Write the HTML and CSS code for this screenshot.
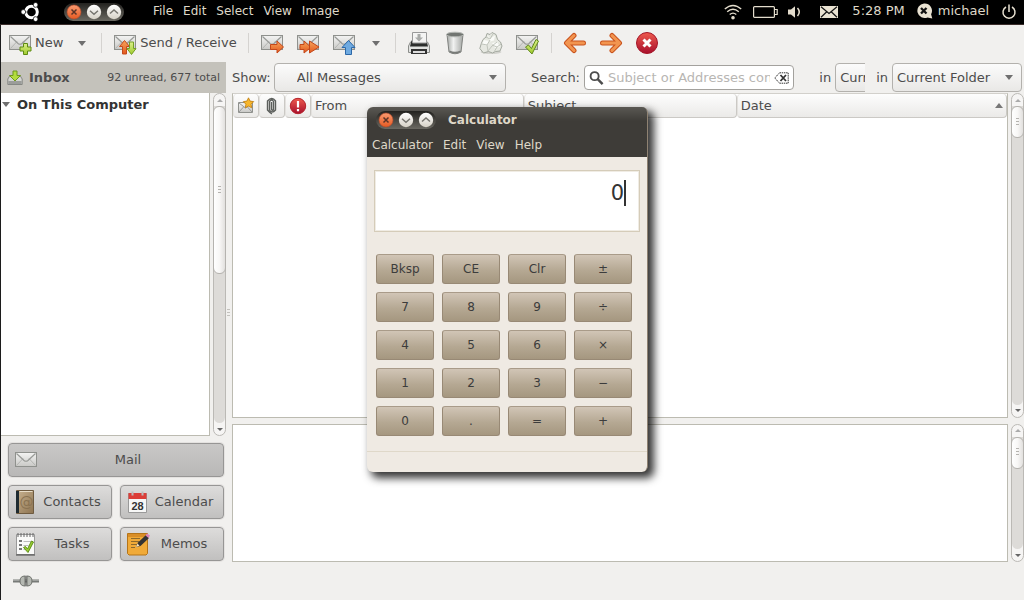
FILE: index.html
```
<!DOCTYPE html>
<html lang="en">
<head>
<meta charset="utf-8">
<title>Inbox</title>
<link rel="stylesheet" href="styles.css">
</head>
<body>
<svg class="defs" aria-hidden="true">
  <defs>
    <linearGradient id="g-env" x1="0" y1="0" x2="0" y2="1"><stop offset="0" stop-color="#f4f4f3"/><stop offset="1" stop-color="#c9c9c6"/></linearGradient>
    <linearGradient id="g-orange" x1="0" y1="0" x2="0" y2="1"><stop offset="0" stop-color="#f7a55c"/><stop offset="1" stop-color="#e2571c"/></linearGradient>
    <linearGradient id="g-green" x1="0" y1="0" x2="0" y2="1"><stop offset="0" stop-color="#dcf08a"/><stop offset="1" stop-color="#9fca2c"/></linearGradient>
    <linearGradient id="g-red" x1="0" y1="0" x2="0" y2="1"><stop offset="0" stop-color="#ee5a4e"/><stop offset="1" stop-color="#a80f2c"/></linearGradient>
    <linearGradient id="g-knob" x1="0" y1="0" x2="0" y2="1"><stop offset="0" stop-color="#ffffff"/><stop offset="1" stop-color="#d6d1c6"/></linearGradient>
    <linearGradient id="g-close" x1="0" y1="0" x2="0" y2="1"><stop offset="0" stop-color="#f99a70"/><stop offset="1" stop-color="#e65a22"/></linearGradient>
    <linearGradient id="g-metal" x1="0" y1="0" x2="1" y2="0"><stop offset="0" stop-color="#a4a7a4"/><stop offset=".4" stop-color="#f1f2f1"/><stop offset="1" stop-color="#a4a7a4"/></linearGradient>
    <linearGradient id="g-book" x1="0" y1="0" x2="1" y2="1"><stop offset="0" stop-color="#c9b391"/><stop offset="1" stop-color="#8d7350"/></linearGradient>
    <symbol id="env" viewBox="0 0 24 24">
      <rect x="1.5" y="4.500" width="21" height="14" fill="url(#g-env)" stroke="#8f918d"/>
      <path d="M2.500 17.500 9 10.500M21.500 17.500 15 10.500" stroke="#b4b5b2" fill="none"/>
      <path d="M2.500 5.500 10 12.500Q12 14 14 12.500L21.500 5.500" stroke="#989a97" fill="none" stroke-width="1.200"/>
    </symbol>
    <symbol id="knob-x" viewBox="0 0 16 16"><circle cx="8" cy="8" r="7" fill="url(#g-close)" stroke="#b9492a" stroke-width=".6"/><path d="M5.500 5.500l5 5M10.500 5.500l-5 5" stroke="#5c3427" stroke-width="1.500"/></symbol>
    <symbol id="knob-down" viewBox="0 0 16 16"><circle cx="8" cy="8" r="7.200" fill="url(#g-knob)"/><path d="M4 6.700l4 3.500 4-3.500" fill="none" stroke="#77756f" stroke-width="1.500"/></symbol>
    <symbol id="knob-up" viewBox="0 0 16 16"><circle cx="8" cy="8" r="7.200" fill="url(#g-knob)"/><path d="M4 9.500l4-3.500 4 3.500" fill="none" stroke="#77756f" stroke-width="1.500"/></symbol>
    <symbol id="arrow-r" viewBox="0 0 24 24"><path d="M3.500 12H20M13 4.500 20.500 12 13 19.500" fill="none" stroke="#c9531d" stroke-width="5" stroke-linecap="round" stroke-linejoin="round"/><path d="M3.500 12H20M13 4.500 20.500 12 13 19.500" fill="none" stroke="#f29550" stroke-width="3" stroke-linecap="round" stroke-linejoin="round"/></symbol>
  </defs>
</svg>

<div class="desktop">
  <header class="panel">
    <svg class="logo" viewBox="0 0 20 20" role="img" aria-label="System">
      <circle cx="11.500" cy="10" r="5.800" fill="none" stroke="#fff" stroke-width="3"/>
      <path d="M4 10H8M14.500 5.300 16 2.500M14.500 14.700 16 17.500" stroke="#000" stroke-width=".5"/>
      <g fill="#fff" stroke="#000" stroke-width=".7"><circle cx="3.300" cy="10" r="2.400"/><circle cx="15.600" cy="2.900" r="2.400"/><circle cx="15.600" cy="17.100" r="2.400"/></g>
    </svg>
    <div class="knobs">
      <button aria-label="Close"><svg><use href="#knob-x"/></svg></button>
      <button aria-label="Minimize"><svg><use href="#knob-down"/></svg></button>
      <button aria-label="Maximize"><svg><use href="#knob-up"/></svg></button>
    </div>
    <nav class="menu">
      <button>File</button><button>Edit</button><button>Select</button><button>View</button><button>Image</button>
    </nav>
    <div class="tray">
      <svg class="wifi" viewBox="0 0 18 16" fill="none" stroke="#e3dccc" stroke-width="1.400"><path d="M.8 5Q9-2.200 17.200 5M3.200 7.700Q9 2.700 14.800 7.700M5.700 10.500Q9 7.800 12.300 10.500"/><circle cx="9" cy="13.700" r="1.100" fill="#e3dccc"/></svg>
      <svg class="battery" viewBox="0 0 25 12" fill="none" stroke="#e3dccc" stroke-width="1.200"><rect x=".6" y=".6" width="20.800" height="10.800" rx="1"/><path d="M21.400 3.500h2.800v5h-2.800"/></svg>
      <svg class="sound" viewBox="0 0 14 12"><path d="M0 3.500h3L7 .3v11.400L3 8.500H0z" fill="#e3dccc"/><path d="M9.500 2Q13 6 9.500 10" fill="none" stroke="#e3dccc" stroke-width="1.500"/></svg>
      <svg class="message" viewBox="0 0 18 12"><path fill="#e9e2d2" d="M0 0h18v12H0z"/><path d="M1 .8 9 7.500 17 .8M1 11.300 6.500 6M17 11.300 11.500 6" fill="none" stroke="#111" stroke-width="1.200"/></svg>
      <span class="clock">5:28 PM</span>
      <span class="user"><svg viewBox="0 0 17 16"><path d="M8 .5a7.300 7.300 0 1 0 3.500 14l4.800 1-1.200-4.300A7.300 7.300 0 0 0 8 .5z" fill="#e9e2d2"/><path d="M5 5l5.500 5.500M10.500 5 5 10.500" stroke="#111" stroke-width="2.300"/></svg>michael</span>
      <button aria-label="Shut down"><svg class="power" viewBox="0 0 16 16" fill="none" stroke="#e9e2d2" stroke-width="1.500"><path d="M5 3A6 6 0 1 0 11 3M8 .5V8"/></svg></button>
    </div>
  </header>

  <main class="app">
    <div class="toolbar">
      <button class="tool"><svg class="ico"><use href="#env"/><path d="M15.500 12.500h4v3.500h3.500v4h-3.500V23.500h-4V20H12v-4h3.500z" fill="url(#g-green)" stroke="#5d8a12"/></svg>New</button>
      <button class="drop" aria-label="New options"><i class="tri"></i></button>
      <span class="sep"></span>
      <button class="tool"><svg class="ico"><use href="#env"/><path d="M11.500 9.500l5 6h-3v7.500h-4v-7.500h-3z" fill="url(#g-orange)" stroke="#c4481a"/><path d="M18.500 23.500l-4.500-6h2.500V11h4v6.500H23z" fill="url(#g-green)" stroke="#75a022"/></svg>Send / Receive</button>
      <span class="sep"></span>
      <button class="icon" aria-label="Reply"><svg class="ico"><use href="#env"/><path d="M10.500 13.500h6.500v-3.500l6.500 6-6.500 6V18.500h-6.500z" fill="url(#g-orange)" stroke="#c4481a"/></svg></button>
      <button class="icon" aria-label="Reply to all"><svg class="ico"><use href="#env"/><path d="M4 13.500h4v-3.500l5.500 5V10l9.500 6-9.500 6v-4.500L8 22V18.500H4z" fill="url(#g-orange)" stroke="#c4481a"/><path d="M13.500 10v11" stroke="#c4481a"/></svg></button>
      <button class="icon" aria-label="Forward"><svg class="ico"><use href="#env"/><path d="M16.500 9.500l6.500 7h-3.500v7h-6v-7H10z" fill="#6faae0" stroke="#2c68a8"/></svg></button>
      <button class="drop" aria-label="Forward options"><i class="tri"></i></button>
      <span class="sep"></span>
      <button class="icon" aria-label="Print"><svg class="ico">
        <path d="M3.500 11h17l2 4v6.500h-21V15z" fill="#e1e2e0" stroke="#8c8e8b"/><path d="M4.500 9.500h15l1.500 6H3z" fill="#2c2e2d"/><path d="M5.500 1.500h14V12h-14z" fill="#f4f4f3" stroke="#999"/><path d="M10.500 3h3v3.500H16L12 10.500 8 6.500h2.500z" fill="#a8aaa8"/>
        <path d="M4 18h16v5H4z" fill="#333"/><path d="M6 20h12v2H6z" fill="#ddd"/></svg></button>
      <button class="icon" aria-label="Delete"><svg class="ico">
        <path d="M4 3.500 6 21q6 3.500 12 0L20 3.500z" fill="url(#g-metal)" stroke="#80827f"/><ellipse cx="12" cy="3.500" rx="8.500" ry="2.300" fill="#717571" stroke="#b5b8b4"/><path d="M6.500 19.500q5.500 2.500 11 0V21q-5.500 3-11 0z" fill="#777a77"/></svg></button>
      <button class="icon" aria-label="Junk"><svg class="ico">
        <ellipse cx="12" cy="21" rx="10.500" ry="2" fill="#d2d2cd"/>
        <path d="M7 6l1-3.500 3 1 2-2 4 2 1.500 5 3 2.500 1.500 4-2 5-4.500.5-3 1.500-4-1.500-5 1.500L.8 17.500l1.500-5L4 8.500z" fill="#e6e8e1" stroke="#a3a89f"/>
        <path d="M8 3.500l3 4 5-3-1 5-4 1zM5 9l5 1-2 5-5-2zM13 12l5-1 3 5-5 1z" fill="#fafbf8"/>
        <path d="M7 6l4 2 3-5M11 9l-3 5-5-1M8 14l1 6 4-5 5-4M13 14l5 2 4-3M18 16l-3 5" fill="none" stroke="#c0c4bb"/></svg></button>
      <button class="icon" aria-label="Not junk"><svg class="ico"><use href="#env"/><path d="M10.500 16l3-2 3 3.500 4.500-9 2.500 1.500-6.500 13z" fill="url(#g-green)" stroke="#60891a"/></svg></button>
      <span class="sep"></span>
      <button class="icon" aria-label="Previous"><svg class="ico flip"><use href="#arrow-r"/></svg></button>
      <button class="icon" aria-label="Next"><svg class="ico"><use href="#arrow-r"/></svg></button>
      <button class="icon" aria-label="Stop"><svg class="ico"><circle cx="12" cy="12" r="10.500" fill="url(#g-red)" stroke="#a51627"/><path d="M8.500 8.500l7 7M15.500 8.500l-7 7" stroke="#fff" stroke-width="3"/></svg></button>
    </div>

    <div class="columns">
      <aside class="side">
        <div class="folder-head">
          <svg class="inbox-ico" viewBox="0 0 16 16"><path d="M.8 9 3 5.500h10L15.200 9v5.500H.8z" fill="#d4d5d2" stroke="#868884"/><path d="M1.300 11h13.400v3H1.300z" fill="#9b9d9a"/><path d="M6 1h4v4.500h3.500L8 11 2.500 5.500H6z" fill="#b3dc3e" stroke="#6f9a1c"/></svg>
          <h1>Inbox</h1><span>92 unread, 677 total</span>
        </div>
        <div class="scroll-pane">
          <div class="box tree"><i class="tri"></i>On This Computer</div>
          <div class="scrollbar"><button aria-label="Scroll up"><i class="up"></i></button><div class="track"><div class="thumb long"></div></div><button aria-label="Scroll down"><i class="down"></i></button></div>
        </div>
        <nav class="switcher">
          <button class="wide"><svg class="ico"><use href="#env"/></svg><span>Mail</span></button>
          <button><svg class="ico"><path d="M2.500.5h17v23h-17z" fill="url(#g-book)" stroke="#6f5b40"/><path d="M2 1h3v22H2z" fill="#1f2b30"/><path d="M5.500 1.500h13" stroke="#e8ddc8"/><text x="12.500" y="17" class="at">@</text></svg><span>Contacts</span></button>
          <button><svg class="ico"><path d="M2.500 3.500h18v19h-18z" fill="#f7f7f6" stroke="#999"/><path d="M2.500 3h18v6h-18z" fill="#dc3e38"/><path d="M6.500 1.500v4M16.500 1.500v4" stroke="#bbb" stroke-width="2"/><text x="11.500" y="19.500" class="day">28</text></svg><span>Calendar</span></button>
          <button><svg class="ico"><path d="M2.500 2.500h18v20h-18z" fill="#fafaf9" stroke="#999"/><path d="M2 23h19" stroke="#444"/><path d="M4 1v4M7 1v4M10 1v4M13 1v4M16 1v4M19 1v4" stroke="#666"/><path d="M5 9h3M5 13h3M5 17h3" stroke="#777" stroke-width="2"/><path d="M9.500 9.500h8M9.500 13.500h5M9.500 17.500h3" stroke="#bbb"/><path d="M9.500 15.500l2-1 2 2.500 4-8 2 1-5.500 10.500z" fill="#98cc32" stroke="#60911a"/></svg><span>Tasks</span></button>
          <button><svg class="ico"><path d="M1.500 1.500h20v20l-1.500 1.500H3l-1.500-1.500z" fill="#f0aa38" stroke="#b57418"/><path d="M2 2h19v3H2z" fill="#d98e27"/><path d="M5 6.500h9M5 9.500h8M5 12.500h6M5 15.500h4" stroke="#8d6a2d"/><path d="M10 15l2-4.500 8-7.500 3 3-8.500 8z" fill="#333"/><path d="M10 15l1.500-3.500 2 2.200z" fill="#f6e3bc"/><path d="M19.500 3.500l1.500-2 3 2-1.500 2.500z" fill="#d985b7"/></svg><span>Memos</span></button>
        </nav>
      </aside>

      <section class="content">
        <div class="filters">
          <label for="show">Show:</label>
          <span class="combo show"><select id="show"><option>All Messages</option></select><i class="tri"></i></span>
          <label for="search" class="search-label">Search:</label>
          <span class="search">
            <svg class="lens" viewBox="0 0 16 16" fill="none" stroke="#4c4c4c"><circle cx="6" cy="6" r="4.300" stroke-width="2"/><path d="M9 9l5.500 5.500" stroke-width="2.600"/></svg>
            <input id="search" type="text" placeholder="Subject or Addresses contain">
            <button aria-label="Clear"><svg class="clear" viewBox="0 0 15 12" fill="none" stroke="#333"><path d="M5.500.8h8.700v10.400H5.500L.8 6z" stroke-dasharray="1.500 .7"/><path d="M6.500 3l5.500 6M12 3 6.500 9" stroke-width="1.800"/></svg></button>
          </span>
          <label for="scope1" class="in-label">in</label>
          <span class="clip"><span class="combo scope"><select id="scope1"><option>Current Folder</option></select></span></span>
          <label for="scope2" class="in-label second">in</label>
          <span class="combo scope"><select id="scope2"><option>Current Folder</option></select><i class="tri"></i></span>
        </div>
        <div class="scroll-pane list-pane">
          <div class="box">
            <table class="messages">
              <thead><tr>
                <th class="flag"><button aria-label="Status"><svg viewBox="0 0 18 18"><path d="M1.500 5.500h14v10h-14z" fill="url(#g-env)" stroke="#8f918d"/><path d="M2 6l6.500 5 6.500-5M2 15l4.500-5M15 15l-4.500-5" fill="none" stroke="#999"/><path d="M11.500.8l1.600 3.300 3.600.5-2.600 2.600.6 3.600-3.200-1.700-3.200 1.700.6-3.600L6.300 4.600l3.600-.5z" fill="#f7b62b" stroke="#bd7a0b" stroke-width=".8"/></svg></button></th>
                <th class="flag"><button aria-label="Attachment"><svg viewBox="0 0 18 18" fill="none" stroke="#5c5f5c" stroke-width="1.400"><path d="M8.500 5v7.500q1 1.500 2 0V4.500Q9 1.500 6.500 4.500V13Q9 17 12.500 13V4Q9-1 4.500 4v9Q7 16 9 16.800"/></svg></button></th>
                <th class="flag"><button aria-label="Priority"><svg viewBox="0 0 18 18"><circle cx="9" cy="9" r="7.700" fill="url(#g-red)" stroke="#b4232c"/><path d="M9 4v6.500M9 12v2.200" stroke="#fff" stroke-width="2.200"/></svg></button></th>
                <th class="from"><button>From</button></th>
                <th class="subject"><button>Subject</button></th>
                <th><button>Date<i class="sort"></i></button></th>
              </tr></thead>
            </table>
          </div>
          <div class="scrollbar"><button aria-label="Scroll up"><i class="up"></i></button><div class="track"><div class="thumb"></div></div><button aria-label="Scroll down"><i class="down"></i></button></div>
        </div>
        <div class="scroll-pane preview">
          <div class="box"></div>
          <div class="scrollbar"><button aria-label="Scroll up"><i class="up"></i></button><div class="track"><div class="thumb"></div></div><button aria-label="Scroll down"><i class="down"></i></button></div>
        </div>
        <span class="grip"></span>
      </section>
    </div>

    <footer class="status">
      <button aria-label="Online"><svg viewBox="0 0 28 14"><path d="M1 7h26" stroke="#777a77" stroke-width="3"/><path d="M1 6.500h26" stroke="#a0a29f"/><path d="M13 2q-5 0-5 5t5 5zM15 2q5 0 5 5t-5 5z" fill="#b5b8b2" stroke="#6f726d"/><path d="M14 1.500v11" stroke="#555" stroke-width="1"/></svg></button>
    </footer>
  </main>

  <section class="calc">
    <div class="calc-head">
      <div class="title-row">
        <div class="knobs">
          <button aria-label="Close"><svg><use href="#knob-x"/></svg></button>
          <button aria-label="Minimize"><svg><use href="#knob-down"/></svg></button>
          <button aria-label="Maximize"><svg><use href="#knob-up"/></svg></button>
        </div>
        <h2>Calculator</h2>
      </div>
      <nav class="menu"><button>Calculator</button><button>Edit</button><button>View</button><button>Help</button></nav>
    </div>
    <div class="display"><input type="text" value="0" aria-label="Display"><i class="caret"></i></div>
    <div class="keys">
      <button>Bksp</button><button>CE</button><button>Clr</button><button>±</button>
      <button>7</button><button>8</button><button>9</button><button>÷</button>
      <button>4</button><button>5</button><button>6</button><button>×</button>
      <button>1</button><button>2</button><button>3</button><button>−</button>
      <button>0</button><button>.</button><button>=</button><button>+</button>
    </div>
    <div class="calc-status"></div>
  </section>
</div>
</body>
</html>
```

FILE: styles.css
```
* { box-sizing: border-box; }
body { margin: 0; background: #fff; color: #4c4c4c; font: 13px/16px "DejaVu Sans", sans-serif; }
button, input, select { font: inherit; color: inherit; margin: 0; padding: 0; border: 0; background: none; }
button { display: flex; align-items: center; justify-content: center; white-space: nowrap; }
svg { display: block; flex: none; }
.defs { position: absolute; width: 0; height: 0; }
.desktop { position: relative; display: flex; flex-direction: column; min-height: calc(100vh - 6px); }

/* Top panel */
.panel { display: flex; align-items: center; height: 25px; padding: 0 7px 0 20px; background: #000; border-bottom: 1px solid #3a2c2a; color: #dfd8c8; }
.logo { width: 20px; height: 20px; margin-right: 24px; }
.knobs { display: flex; align-items: center; gap: 4px; height: 18px; padding: 0 2px; border-radius: 9px; background: linear-gradient(#23221f, #6b6962); }
.knobs svg { width: 16px; height: 16px; }
.menu { display: flex; gap: 10px; font-size: 12px; line-height: 16px; }
.panel .menu, .clock, .user { padding-bottom: 2px; }
.panel .menu { margin-left: 29px; }
.tray { display: flex; align-items: center; margin-left: auto; }
.wifi { width: 18px; height: 16px; margin-right: 11px; }
.battery { width: 25px; height: 12px; margin-right: 10px; }
.sound { width: 14px; height: 12px; margin-right: 18px; }
.message { width: 18px; height: 12px; margin-right: 14px; }
.clock { margin-right: 11px; }
.user { display: flex; align-items: center; gap: 5px; margin-right: 12px; }
.user svg { width: 17px; height: 16px; }
.power { width: 16px; height: 16px; }

/* Mail window */
.app { flex: 1; display: flex; flex-direction: column; border-left: 1px solid #1c1c1c; background: #f1f0ee; }
.toolbar { display: flex; align-items: center; gap: 11px; height: 37px; padding: 0 7px 1px; }
.tool { gap: 3px; font-size: 13px; }
.ico { width: 24px; height: 24px; }
.flip { transform: scaleX(-1); }
.icon { width: 25px; justify-content: flex-start; }
.drop { width: 16px; height: 24px; }
.sep { width: 1px; height: 20px; background: #d5d3d0; }
.tri, .down, .up, .sort { flex: none; width: 0; height: 0; border: 4px solid transparent; border-bottom-width: 0; border-top: 5px solid #6f6f6f; }
.up, .sort { border-top-width: 0; border-bottom: 5px solid #777; }
.columns { flex: 1; display: flex; gap: 6px; }

.side { flex: none; width: 225px; display: flex; flex-direction: column; }
.folder-head { display: flex; align-items: center; height: 31px; padding: 0 6px; background: #c4c2bb; }
.folder-head h1 { flex: 1; margin: 0 0 0 6px; font-size: 13px; font-weight: bold; }
.folder-head span { font-size: 11px; }
.inbox-ico { width: 16px; height: 16px; }
.scroll-pane { flex: 1; display: flex; gap: 3px; }
.box { flex: 1; background: #fff; border: 1px solid #bcbbb1; }
.tree { display: flex; align-items: flex-start; gap: 7px; padding: 4px 0 0 1px; border-width: 0 1px 1px 0; font-weight: bold; color: #333; }
.tree .tri { margin-top: 5px; }
.scrollbar { flex: none; display: flex; flex-direction: column; width: 13px; border: 1px solid #bbb9b5; border-radius: 7px; background: #f6f5f4; }
.scrollbar button { height: 12px; }
.scrollbar .up, .scrollbar .down { border-left-width: 3px; border-right-width: 3px; }
.scrollbar .up { border-bottom: 3px solid #aaa; }
.scrollbar .down { border-top: 3px solid #666; }
.track { flex: 1; background: #dddbd8; border-radius: 0 0 6px 6px; }
.thumb { height: 32px; border: 1px solid #b5b3af; border-radius: 6px; background: repeating-linear-gradient(#b5b3af 0 1px, transparent 1px 3px) center / 3px 9px no-repeat, linear-gradient(90deg, #fff, #f8f7f6 50%, #e2e0de); margin: 0 -1px; }
.thumb.long { height: 168px; }
.switcher { display: grid; grid-template-columns: 1fr 1fr; gap: 8px; padding: 7px 2px 1px 7px; }
.switcher button { height: 34px; padding: 0 5px; border: 1px solid #979695; border-radius: 4px; background: linear-gradient(#dddcdb, #c1c0bf); box-shadow: 0 0 0 1px #e4e2e0; }
.switcher .wide { grid-column: 1 / -1; background: linear-gradient(#c9c8c7, #b9b8b7); }
.switcher span { flex: 1; text-align: center; }
.at { font: 14px "DejaVu Sans", sans-serif; fill: #8a7352; text-anchor: middle; }
.day { font: bold 11px "Liberation Sans", sans-serif; fill: #333; text-anchor: middle; }
.status { display: flex; align-items: center; height: 38px; padding-left: 11px; }
.status svg { width: 28px; height: 14px; }

/* Message area */
.content { position: relative; flex: 1; min-width: 0; display: flex; flex-direction: column; }
.filters { display: flex; align-items: center; height: 31px; padding-right: 2px; }
.combo { display: flex; align-items: center; height: 29px; border: 1px solid #b3b1ad; border-radius: 4px; background: linear-gradient(#fbfbfb, #e9e8e6); padding-right: 8px; }
.combo select { appearance: none; flex: 1; min-width: 0; height: 27px; padding-left: 4px; }
.show { flex: 233 1 0; margin-left: 3px; }
.show select { padding-left: 22px; }
.search-label { margin: 0 4px 0 25px; }
.search { flex: 210 1 0; min-width: 0; display: flex; align-items: center; gap: 4px; height: 25px; margin-right: 25px; padding: 0 4px; background: #fff; border: 1px solid #a3a19d; border-radius: 4px; }
.search input { flex: 1; min-width: 0; outline: 0; }
.search input::placeholder { color: #b8b6b3; opacity: 1; }
.lens { width: 15px; height: 16px; }
.clear { width: 15px; height: 12px; }
.in-label { margin-right: 4px; }
.in-label.second { margin-left: 11px; }
.scope { flex: none; width: 130px; }
.clip { width: 30px; overflow: hidden; }
.list-pane { flex: 324; }
.list-pane .box { border-top-color: #d2d0cb; }
.preview { flex: 138; margin-top: 6px; }
.messages { width: 100%; table-layout: fixed; border-collapse: collapse; }
.messages th { padding: 0; font-weight: normal; }
.messages button { width: 100%; height: 24px; justify-content: flex-start; padding: 0 3px; border: 1px solid #cbc9c5; border-left-color: #e3e1de; border-top: 0; border-radius: 4px; background: linear-gradient(#fdfdfd, #ebeae8); }
.messages svg { width: 18px; height: 18px; }
.flag { width: 26px; }
.from { width: 27.5%; }
.subject { width: 27.5%; }
.sort { margin-left: auto; }
.grip { position: absolute; left: -5px; top: 247px; width: 3px; height: 9px; background: repeating-linear-gradient(#c3c1bd 0 1px, transparent 1px 3px); }

/* Calculator window, floating over the mail window */
.calc { position: absolute; left: 367px; top: 107px; width: 281px; border-radius: 6px; background: #efeae3; border-right: 1px solid #8f8272; box-shadow: 5px 5px 9px 1px rgba(0, 0, 0, .8); }
.calc-head { height: 50px; padding: 4px 5px; border-radius: 6px 5px 0 0; background: linear-gradient(#5a5853, #3e3c38 14px); color: #dfd8c8; }
.title-row { display: flex; align-items: center; gap: 12px; padding-left: 4px; height: 18px; }
.calc h2 { margin: 0; font-size: 12px; line-height: 18px; }
.calc .menu { margin-top: 8px; }
.display { display: flex; align-items: flex-start; height: 62px; margin: 13px 7px 0; padding: 9px 13px 0; border: 1px solid #d5ccb9; outline: 1px solid #f0ece4; outline-offset: -2px; background: #fff; }
.display input { flex: 1; min-width: 0; height: 26px; text-align: right; font-size: 21px; color: #333; outline: 0; }
.caret { width: 2px; height: 26px; background: #333; }
.keys { display: grid; grid-template-columns: repeat(4, 1fr); gap: 8px; padding: 22px 15px 15px 9px; }
.keys button { height: 30px; border: 1px solid #988975; border-top-color: #a99b89; border-radius: 3px; background: linear-gradient(#d1c5b6, #b5a893 55%, #a59780); font-size: 12px; color: #3c3c3c; }
.calc-status { height: 21px; border-top: 1px solid #dfd8c9; }
```
